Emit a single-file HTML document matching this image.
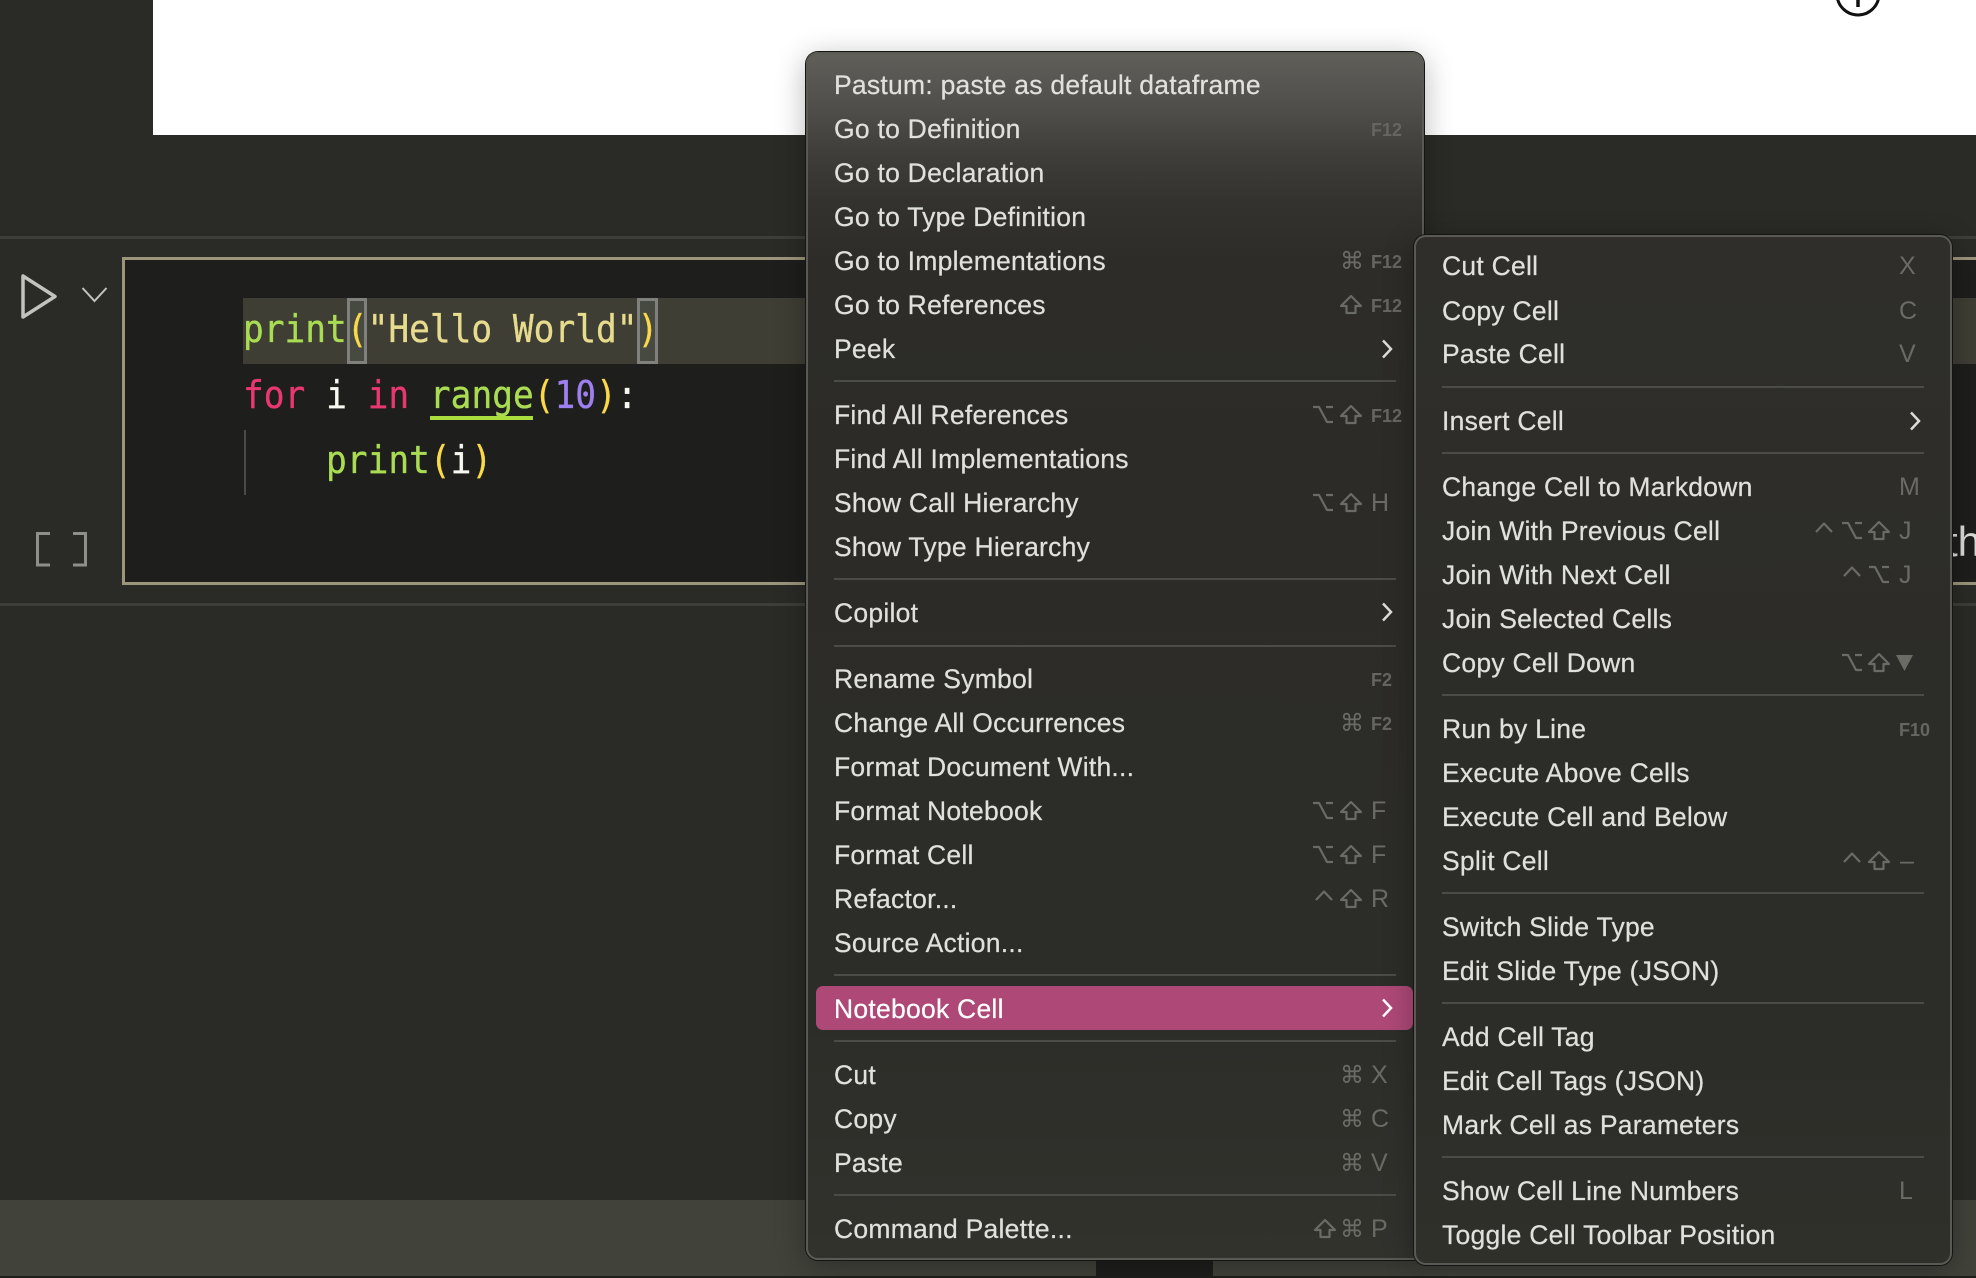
<!DOCTYPE html>
<html><head><meta charset="utf-8"><style>
html,body{margin:0;padding:0;width:1976px;height:1278px;overflow:hidden;background:#2a2b26}
body{position:relative;font-family:"Liberation Sans",sans-serif}
.a0{position:absolute}
.code{position:absolute;left:243px;height:66px;line-height:66px;font-family:"DejaVu Sans Mono",monospace;font-size:38px;white-space:pre;transform:scaleX(.9075);transform-origin:0 0;-webkit-text-stroke:.35px currentColor}
.menu{position:absolute;border-radius:12px;box-shadow:0 0 0 1px #141412,inset 0 0 0 2px #5a5a55,0 6px 30px rgba(0,0,0,.3)}
.r{position:absolute;left:0;width:1976px;height:44px;line-height:44px;font-size:26.5px;color:#e0e0dc}
.t{position:absolute;left:834px;white-space:nowrap;letter-spacing:.25px;-webkit-text-stroke:.22px currentColor}
.s .t{left:1442px}
.k{position:absolute;color:#6b6b66;font-size:25px}
.f{position:absolute;color:#666661;font-size:18px;font-weight:bold;line-height:46px}
.g{position:absolute;color:#6b6b66;font-size:24px;font-family:"DejaVu Sans",sans-serif;transform:translateX(-50%)}
.sep{position:absolute;height:2px;background:#4b4b47}
.m{left:834px;width:562px}.u{left:1442px;width:482px}
.c2{left:1352px}.c3{left:1371px}
.d4{left:1899px}
svg{position:absolute}
svg.x{fill:none;stroke:#6b6b66;stroke-width:2.2;stroke-linejoin:round;overflow:visible}
.sh{top:12px;width:22px;height:19px}.op{top:13px;width:20px;height:17px}.ct{top:13px;width:18px;height:11px}
</style></head><body>
<div class="a0" style="left:153px;top:0;width:1823px;height:135px;background:#fff"></div>
<svg style="left:1830px;top:0" width="56" height="20"><circle cx="28" cy="-6" r="21" fill="none" stroke="#111" stroke-width="3"/><path d="M28 0V7" stroke="#111" stroke-width="3.5"/></svg>

<div class="a0" style="left:0;top:236px;width:1976px;height:3px;background:#3d3e37"></div>
<div class="a0" style="left:0;top:603px;width:1976px;height:3px;background:#3d3e37"></div>
<div class="a0" style="left:122px;top:257px;width:1854px;height:328px;box-sizing:border-box;border:3px solid #9b957c;border-right:0;background:#1e1e1c"></div>
<div class="a0" style="left:243px;top:298px;width:1733px;height:66px;background:#3e3e35"></div>
<div class="a0" style="left:347px;top:298px;width:20px;height:66px;box-sizing:border-box;border:3px solid #80807c;background:#474a40"></div>
<div class="a0" style="left:637px;top:298px;width:21px;height:66px;box-sizing:border-box;border:3px solid #80807c;background:#474a40"></div>
<div class="code" style="top:296px"><span style="color:#a9dc52">print</span><span style="color:#f9d849">(</span><span style="color:#e7db8d">"Hello World"</span><span style="color:#f9d849">)</span></div>
<div class="code" style="top:362px"><span style="color:#e8386f">for</span> <span style="color:#f8f8f2">i</span> <span style="color:#e8386f">in</span> <span style="color:#a9dc52">range</span><span style="color:#f9d849">(</span><span style="color:#9d7ff0">10</span><span style="color:#f9d849">)</span><span style="color:#f8f8f2">:</span></div>
<div class="code" style="top:427px">    <span style="color:#a9dc52">print</span><span style="color:#f9d849">(</span><span style="color:#f8f8f2">i</span><span style="color:#f9d849">)</span></div>
<div class="a0" style="left:430px;top:416px;width:103px;height:4px;background:#a9dc3f"></div>
<div class="a0" style="left:244px;top:430px;width:2px;height:65px;background:#4a4a48"></div>
<svg style="left:15px;top:268px" width="100" height="56"><path d="M8 8V49L40 28.500Z" fill="none" stroke="#c2c2c0" stroke-width="3.500" stroke-linejoin="round"/><path d="M67.500 20L79.500 33L91.500 20" fill="none" stroke="#c2c2c0" stroke-width="2"/></svg>
<svg style="left:30px;top:525px" width="64" height="48"><path d="M20 8.500H7.500V40H20M43 8.500H55.500V40H43" fill="none" stroke="#8e8e8c" stroke-width="3"/></svg>
<div class="a0" style="left:1946px;top:510px;width:30px;height:64px;line-height:64px;font-size:42px;color:#dcdcd8;overflow:hidden;white-space:nowrap">th</div>

<div class="a0" style="left:0;top:1200px;width:1976px;height:76px;background:#41423a"></div>
<div class="a0" style="left:0;top:1276px;width:1976px;height:2px;background:#1f1f1d"></div>
<div class="a0" style="left:1096px;top:1260px;width:117px;height:16px;background:#1e1e1c"></div>

<!-- main menu -->
<div class="menu" style="left:806px;top:52px;width:618px;height:1208px;background:linear-gradient(#605f5a 0,#4e4d49 60px,#3f3e3a 100px,#33322e 150px,#2d2c28 210px,#2c2b27 420px,#2c2c28 950px,#32322d 1208px)"></div>

<div class="r" style="top:63px"><span class="t">Pastum: paste as default dataframe</span></div>
<div class="r" style="top:107px"><span class="t">Go to Definition</span><span class="f c3">F12</span></div>
<div class="r" style="top:151px"><span class="t">Go to Declaration</span></div>
<div class="r" style="top:195px"><span class="t">Go to Type Definition</span></div>
<div class="r" style="top:239px"><span class="t">Go to Implementations</span><span class="g c2">⌘</span><span class="f c3">F12</span></div>
<div class="r" style="top:283px"><span class="t">Go to References</span><svg class="x sh" style="left:1340px"><path d="M11 1L21 11H15.500V18H6.500V11H1Z"/></svg><span class="f c3">F12</span></div>
<div class="r" style="top:327px"><span class="t">Peek</span></div>
<svg style="left:1380px;top:339px" width="14" height="20"><path d="M3 1.500L11 10L3 18.500" fill="none" stroke="#dcdcd8" stroke-width="2.500"/></svg>
<div class="sep m" style="top:380px"></div>
<div class="r" style="top:393px"><span class="t">Find All References</span><svg class="x op" style="left:1313px"><path d="M0 1H6L14 16H20M13 1H20"/></svg><svg class="x sh" style="left:1340px"><path d="M11 1L21 11H15.500V18H6.500V11H1Z"/></svg><span class="f c3">F12</span></div>
<div class="r" style="top:437px"><span class="t">Find All Implementations</span></div>
<div class="r" style="top:481px"><span class="t">Show Call Hierarchy</span><svg class="x op" style="left:1313px"><path d="M0 1H6L14 16H20M13 1H20"/></svg><svg class="x sh" style="left:1340px"><path d="M11 1L21 11H15.500V18H6.500V11H1Z"/></svg><span class="k c3">H</span></div>
<div class="r" style="top:525px"><span class="t">Show Type Hierarchy</span></div>
<div class="sep m" style="top:578px"></div>
<div class="r" style="top:591px"><span class="t">Copilot</span></div>
<svg style="left:1380px;top:602px" width="14" height="20"><path d="M3 1.500L11 10L3 18.500" fill="none" stroke="#dcdcd8" stroke-width="2.500"/></svg>
<div class="sep m" style="top:645px"></div>
<div class="r" style="top:657px"><span class="t">Rename Symbol</span><span class="f c3">F2</span></div>
<div class="r" style="top:701px"><span class="t">Change All Occurrences</span><span class="g c2">⌘</span><span class="f c3">F2</span></div>
<div class="r" style="top:745px"><span class="t">Format Document With...</span></div>
<div class="r" style="top:789px"><span class="t">Format Notebook</span><svg class="x op" style="left:1313px"><path d="M0 1H6L14 16H20M13 1H20"/></svg><svg class="x sh" style="left:1340px"><path d="M11 1L21 11H15.500V18H6.500V11H1Z"/></svg><span class="k c3">F</span></div>
<div class="r" style="top:833px"><span class="t">Format Cell</span><svg class="x op" style="left:1313px"><path d="M0 1H6L14 16H20M13 1H20"/></svg><svg class="x sh" style="left:1340px"><path d="M11 1L21 11H15.500V18H6.500V11H1Z"/></svg><span class="k c3">F</span></div>
<div class="r" style="top:877px"><span class="t">Refactor...</span><svg class="x ct" style="left:1315px"><path d="M1 10L9 1.500L17 10"/></svg><svg class="x sh" style="left:1340px"><path d="M11 1L21 11H15.500V18H6.500V11H1Z"/></svg><span class="k c3">R</span></div>
<div class="r" style="top:921px"><span class="t">Source Action...</span></div>
<div class="sep m" style="top:974px"></div>
<div class="a0" style="left:816px;top:986px;width:597px;height:44px;border-radius:7px;background:#ae4877"></div>
<div class="r" style="top:987px;color:#fff"><span class="t">Notebook Cell</span></div>
<svg style="left:1380px;top:998px" width="14" height="20"><path d="M3 1.500L11 10L3 18.500" fill="none" stroke="#fff" stroke-width="2.500"/></svg>
<div class="sep m" style="top:1040px"></div>
<div class="r" style="top:1053px"><span class="t">Cut</span><span class="g c2">⌘</span><span class="k c3">X</span></div>
<div class="r" style="top:1097px"><span class="t">Copy</span><span class="g c2">⌘</span><span class="k c3">C</span></div>
<div class="r" style="top:1141px"><span class="t">Paste</span><span class="g c2">⌘</span><span class="k c3">V</span></div>
<div class="sep m" style="top:1194px"></div>
<div class="r" style="top:1207px"><span class="t">Command Palette...</span><svg class="x sh" style="left:1314px"><path d="M11 1L21 11H15.500V18H6.500V11H1Z"/></svg><span class="g c2">⌘</span><span class="k c3">P</span></div>

<!-- submenu -->
<div class="menu" style="left:1414px;top:235px;width:538px;height:1030px;background:linear-gradient(#2f2e2a,#2c2c28 500px,#2c2c28 800px,#30302b)"></div>
<div class="s">
<div class="r" style="top:244px"><span class="t">Cut Cell</span><span class="k d4">X</span></div>
<div class="r" style="top:289px"><span class="t">Copy Cell</span><span class="k d4">C</span></div>
<div class="r" style="top:332px"><span class="t">Paste Cell</span><span class="k d4">V</span></div>
<div class="sep u" style="top:386px"></div>
<div class="r" style="top:399px"><span class="t">Insert Cell</span></div>
<svg style="left:1908px;top:411px" width="14" height="20"><path d="M3 1.500L11 10L3 18.500" fill="none" stroke="#dcdcd8" stroke-width="2.500"/></svg>
<div class="sep u" style="top:452px"></div>
<div class="r" style="top:465px"><span class="t">Change Cell to Markdown</span><span class="k d4">M</span></div>
<div class="r" style="top:509px"><span class="t">Join With Previous Cell</span><svg class="x ct" style="left:1815px"><path d="M1 10L9 1.500L17 10"/></svg><svg class="x op" style="left:1842px"><path d="M0 1H6L14 16H20M13 1H20"/></svg><svg class="x sh" style="left:1868px"><path d="M11 1L21 11H15.500V18H6.500V11H1Z"/></svg><span class="k d4">J</span></div>
<div class="r" style="top:553px"><span class="t">Join With Next Cell</span><svg class="x ct" style="left:1843px"><path d="M1 10L9 1.500L17 10"/></svg><svg class="x op" style="left:1869px"><path d="M0 1H6L14 16H20M13 1H20"/></svg><span class="k d4">J</span></div>
<div class="r" style="top:597px"><span class="t">Join Selected Cells</span></div>
<div class="r" style="top:641px"><span class="t">Copy Cell Down</span><svg class="x op" style="left:1842px"><path d="M0 1H6L14 16H20M13 1H20"/></svg><svg class="x sh" style="left:1868px"><path d="M11 1L21 11H15.500V18H6.500V11H1Z"/></svg><svg style="left:1896px;top:14px" width="17" height="16"><path d="M0 0H17L8.500 16Z" fill="#6b6b66"/></svg></div>
<div class="sep u" style="top:694px"></div>
<div class="r" style="top:707px"><span class="t">Run by Line</span><span class="f d4">F10</span></div>
<div class="r" style="top:751px"><span class="t">Execute Above Cells</span></div>
<div class="r" style="top:795px"><span class="t">Execute Cell and Below</span></div>
<div class="r" style="top:839px"><span class="t">Split Cell</span><svg class="x ct" style="left:1843px"><path d="M1 10L9 1.500L17 10"/></svg><svg class="x sh" style="left:1868px"><path d="M11 1L21 11H15.500V18H6.500V11H1Z"/></svg><span class="k" style="left:1900px">–</span></div>
<div class="sep u" style="top:892px"></div>
<div class="r" style="top:905px"><span class="t">Switch Slide Type</span></div>
<div class="r" style="top:949px"><span class="t">Edit Slide Type (JSON)</span></div>
<div class="sep u" style="top:1002px"></div>
<div class="r" style="top:1015px"><span class="t">Add Cell Tag</span></div>
<div class="r" style="top:1059px"><span class="t">Edit Cell Tags (JSON)</span></div>
<div class="r" style="top:1103px"><span class="t">Mark Cell as Parameters</span></div>
<div class="sep u" style="top:1156px"></div>
<div class="r" style="top:1169px"><span class="t">Show Cell Line Numbers</span><span class="k d4">L</span></div>
<div class="r" style="top:1213px"><span class="t">Toggle Cell Toolbar Position</span></div>
</div>
</body></html>
